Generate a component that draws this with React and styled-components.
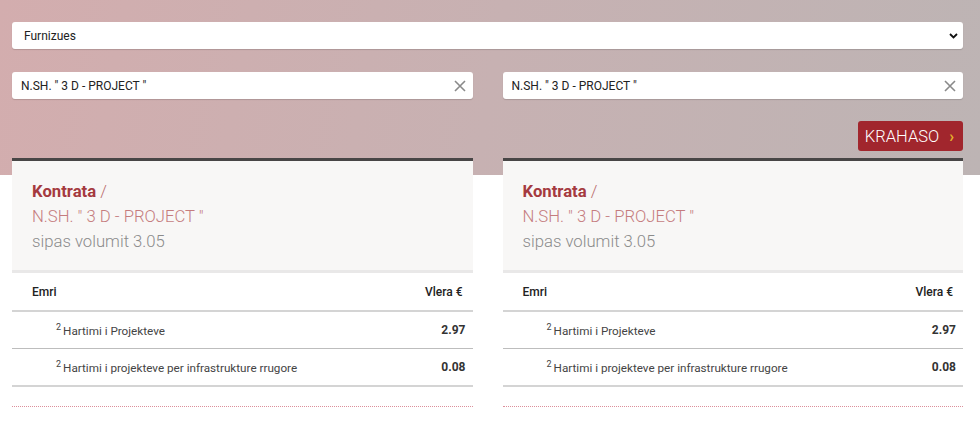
import React from 'react';
import styled, { createGlobalStyle } from 'styled-components';

const GlobalStyle = createGlobalStyle`
  html, body {
    margin: 0;
    padding: 0;
  }
  body {
    font-family: Roboto, "Liberation Sans", Arial, sans-serif;
    background: #fff linear-gradient(100deg, #d3adae 0%, #c7b1b2 50%, #bdb4b4 100%) no-repeat;
    background-size: 100% 175px;
    color: #222;
  }
`;

const Page = styled.div`
  padding: 22px 17px 0 12px;
`;

const SelectWrap = styled.div`
  position: relative;
  margin-bottom: 23px;
`;

const Select = styled.select`
  appearance: none;
  display: block;
  width: 100%;
  height: 27px;
  border: none;
  border-radius: 3px;
  background: #fff;
  box-shadow: 0 1px 1px rgba(0, 0, 0, 0.15);
  padding: 0 12px;
  font-family: Roboto, "Liberation Sans", Arial, sans-serif;
  font-size: 12px;
  color: #222;
  outline: none;
`;

const Chevron = styled.svg`
  position: absolute;
  right: 5px;
  top: 11px;
  pointer-events: none;
`;

const Columns = styled.div`
  display: grid;
  grid-template-columns: 1fr 1fr;
  column-gap: 30px;
`;

const Column = styled.div`
  display: flex;
  flex-direction: column;
`;

const SearchBox = styled.div`
  display: flex;
  align-items: center;
  height: 27px;
  background: #fff;
  border-radius: 3px;
  box-shadow: 0 1px 1px rgba(0, 0, 0, 0.15);
  padding: 0 7px 0 9px;
`;

const SearchInput = styled.input`
  flex: 1;
  border: none;
  outline: none;
  background: transparent;
  font-family: Roboto, "Liberation Sans", Arial, sans-serif;
  font-size: 12px;
  color: #222;
  padding: 0;
`;

const ClearIcon = styled.svg`
  flex: none;
`;

const Actions = styled.div`
  display: flex;
  justify-content: flex-end;
  height: 30px;
  margin: 22px 0 7px;
`;

const CompareButton = styled.button`
  display: ${(p) => (p.$hidden ? 'none' : 'flex')};
  align-items: center;
  gap: 10px;
  height: 30px;
  padding: 0 9px 0 7px;
  border: none;
  border-radius: 3px;
  background: #a1262d;
  color: #fff;
  font-family: Roboto, "Liberation Sans", Arial, sans-serif;
  font-size: 16.5px;
  font-weight: 300;
  cursor: pointer;
`;

const Arrow = styled.span`
  color: #e5b22a;
  font-size: 16px;
  font-weight: 700;
`;

const Card = styled.section`
  border-top: 3px solid #484646;
`;

const CardHead = styled.header`
  background: #f8f7f6;
  border-bottom: 3px solid #e9e8e8;
  padding: 18px 20px 16px;
  font-size: 16.7px;
  line-height: 25px;
  font-weight: 300;
`;

const HeadLine = styled.div`
  color: ${(p) => p.$color};
`;

const Title = styled.strong`
  color: #a53a3f;
  font-weight: 700;
`;

const Slash = styled.span`
  color: #b86b6d;
  font-weight: 300;
`;

const Table = styled.table`
  width: 100%;
  border-collapse: collapse;
  font-size: 12px;
`;

const Th = styled.th`
  height: 37px;
  padding: 0 ${(p) => (p.$right ? '10px' : '0')} 0 ${(p) => (p.$right ? '0' : '20px')};
  text-align: ${(p) => (p.$right ? 'right' : 'left')};
  font-weight: 500;
  color: #222;
  border-bottom: 2px solid #d4d4d4;
`;

const Td = styled.td`
  height: 36px;
  padding: 0 ${(p) => (p.$right ? '7px' : '0')} 0 ${(p) => (p.$right ? '0' : '44px')};
  text-align: ${(p) => (p.$right ? 'right' : 'left')};
  font-size: ${(p) => (p.$right ? '12px' : '11.7px')};
  font-weight: ${(p) => (p.$right ? 700 : 400)};
  color: ${(p) => (p.$right ? '#333' : '#444')};
  border-bottom: ${(p) => (p.$last ? '2px solid #d4d4d4' : '1px solid #bdbdbd')};
`;

const Sup = styled.sup`
  font-size: 9px;
  margin-right: 2px;
`;

const Divider = styled.div`
  margin-top: 19px;
  border-top: 1px dotted #dc8f9b;
`;

const rows = [
  { id: 1, name: 'Hartimi i Projekteve', value: '2.97' },
  { id: 2, name: 'Hartimi i projekteve per infrastrukture rrugore', value: '0.08' },
];

const supplier = 'N.SH. " 3 D - PROJECT "';

function ContractColumn({ withButton }) {
  return (
    <Column>
      <SearchBox>
        <SearchInput readOnly value={supplier} />
        <ClearIcon width="12" height="12" viewBox="0 0 12 12">
          <path d="M1 1L11 11M11 1L1 11" stroke="#8a8a8a" strokeWidth="1.6" />
        </ClearIcon>
      </SearchBox>
      <Actions>
        <CompareButton $hidden={!withButton}>
          KRAHASO <Arrow>›</Arrow>
        </CompareButton>
      </Actions>
      <Card>
        <CardHead>
          <HeadLine>
            <Title>Kontrata</Title> <Slash>/</Slash>
          </HeadLine>
          <HeadLine $color="#c57c7e">{supplier}</HeadLine>
          <HeadLine $color="#8b8b8b">sipas volumit 3.05</HeadLine>
        </CardHead>
        <Table>
          <thead>
            <tr>
              <Th>Emri</Th>
              <Th $right>Vlera €</Th>
            </tr>
          </thead>
          <tbody>
            {rows.map((r, i) => (
              <tr key={r.id}>
                <Td $last={i === rows.length - 1}>
                  <Sup>2</Sup>
                  {r.name}
                </Td>
                <Td $right $last={i === rows.length - 1}>
                  {r.value}
                </Td>
              </tr>
            ))}
          </tbody>
        </Table>
        <Divider />
      </Card>
    </Column>
  );
}

export default function App() {
  return (
    <>
      <GlobalStyle />
      <Page>
        <SelectWrap>
          <Select defaultValue="furnizues">
            <option value="furnizues">Furnizues</option>
          </Select>
          <Chevron width="9" height="6" viewBox="0 0 9 6">
            <path d="M1 1L4.5 4.5L8 1" stroke="#111" strokeWidth="1.8" fill="none" />
          </Chevron>
        </SelectWrap>
        <Columns>
          <ContractColumn />
          <ContractColumn withButton />
        </Columns>
      </Page>
    </>
  );
}
